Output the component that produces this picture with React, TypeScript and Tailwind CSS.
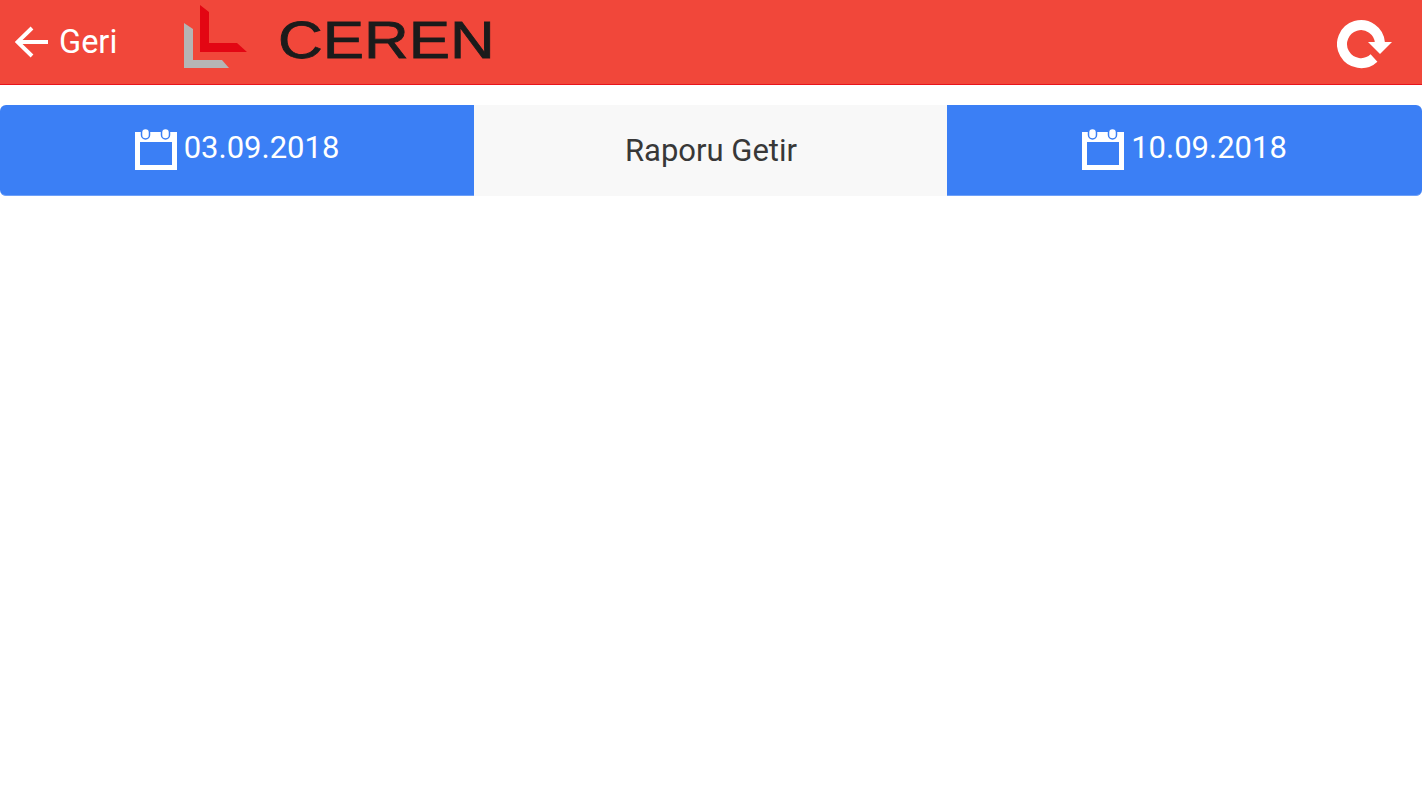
import React from 'react';

const CalendarIcon = () => (
  <svg width="42" height="42" viewBox="0 0 42 42" className="shrink-0">
    <path fill="#fff" fillRule="evenodd" d="M0 3h42v38H0zM5 13v23h32V13z" />
    <rect x="6.5" y="-0.5" width="8" height="10.5" rx="4" fill="#fff" stroke="#3b7ff5" strokeWidth="1.5" />
    <rect x="26.5" y="-0.5" width="8" height="10.5" rx="4" fill="#fff" stroke="#3b7ff5" strokeWidth="1.5" />
  </svg>
);

const DateButton = ({ date, className }: { date: string; className: string }) => (
  <div className={`flex items-center justify-center gap-[7px] bg-[#3b7ff5] border-b border-[#6ea0f8] ${className}`}>
    <CalendarIcon />
    <span className="mb-[6px] text-[31px] leading-none text-white">{date}</span>
  </div>
);

export default function App() {
  return (
    <div className="min-h-[800px] bg-white font-['Roboto',sans-serif]">
      <header className="flex h-[85px] items-center border-b border-[#e8141c] bg-[#f1473a]">
        <svg width="34" height="32" viewBox="0 0 34 32" className="ml-[15px] shrink-0">
          <path d="M2 16h31M17 2 2.500 16 17 30" fill="none" stroke="#fff" strokeWidth="4" />
        </svg>
        <span className="ml-[10px] text-[32.5px] leading-none text-white">Geri</span>
        <svg width="63" height="63" viewBox="0 0 63 63" className="ml-[67px] mb-[12px] shrink-0">
          <path d="M0 18 9 24V55H38L45 63H0z" fill="#b5b5b5" />
          <path d="M16 0 25 7V38H53L63 47H16z" fill="#e30613" />
        </svg>
        <span className="ml-[31px] mb-[4px] w-[212px] origin-left scale-x-[1.19] whitespace-nowrap font-['Liberation_Sans',sans-serif] text-[52px] leading-none text-[#1b1b1b] [-webkit-text-stroke:0.8px_#1b1b1b]">
          CEREN
        </span>
        <svg width="56" height="50" viewBox="0 0 56 50" className="ml-auto mr-[29px] mt-[4px] shrink-0">
          <path d="M37 39A19 19 0 1 1 43 24" fill="none" stroke="#fff" strokeWidth="10" />
          <path d="M31 23H55L43 35z" fill="#fff" />
        </svg>
      </header>
      <div className="mt-5 flex h-[91px]">
        <DateButton date="03.09.2018" className="w-[474px] rounded-l-md" />
        <div className="flex flex-1 items-center justify-center bg-[#f8f8f8] pl-[1px] text-[31px] leading-none text-[#383838]">
          Raporu Getir
        </div>
        <DateButton date="10.09.2018" className="w-[475px] rounded-r-md" />
      </div>
    </div>
  );
}
